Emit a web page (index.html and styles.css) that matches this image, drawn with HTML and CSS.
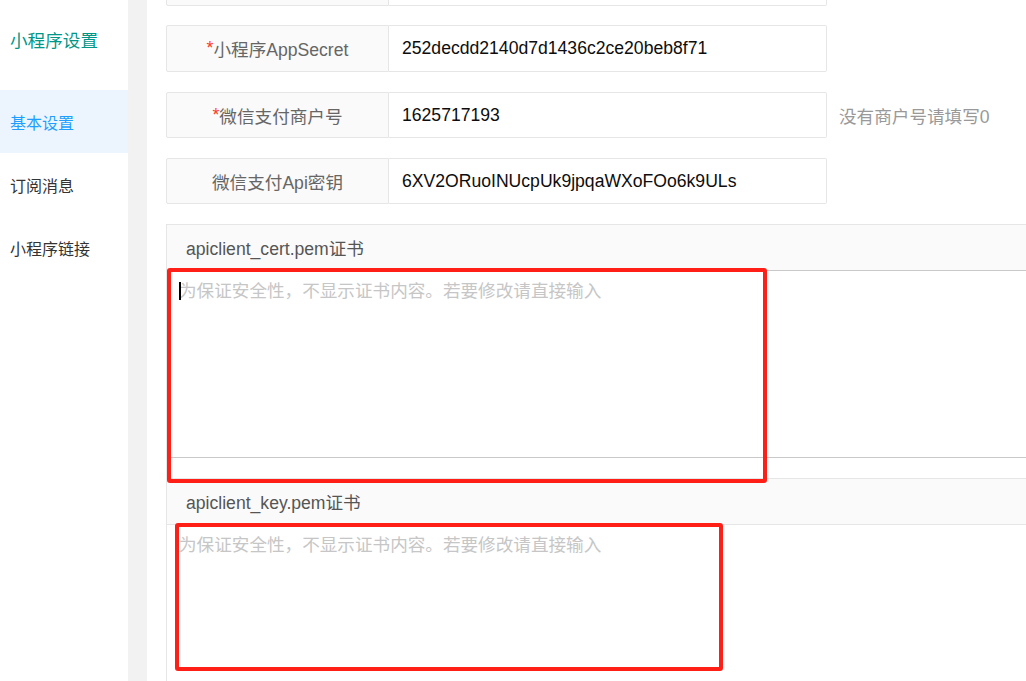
FILE: index.html
```html
<!DOCTYPE html>
<html lang="zh-CN">
<head>
<meta charset="utf-8">
<title>小程序设置</title>
<link rel="stylesheet" href="styles.css">
</head>
<body>
<div class="page">
  <aside class="sidebar">
    <div class="side-title">小程序设置</div>
    <ul class="menu">
      <li class="menu-item active">基本设置</li>
      <li class="menu-item">订阅消息</li>
      <li class="menu-item">小程序链接</li>
    </ul>
  </aside>
  <div class="gutter"></div>
  <main class="main">
    <div class="form">
      <div class="row row-first">
        <div class="label"></div>
        <div class="input"></div>
      </div>
      <div class="row row-tall">
        <div class="label"><span class="req">*</span>小程序AppSecret</div>
        <div class="input">252decdd2140d7d1436c2ce20beb8f71</div>
      </div>
      <div class="row">
        <div class="label"><span class="req">*</span>微信支付商户号</div>
        <div class="input">1625717193</div>
        <div class="hint">没有商户号请填写0</div>
      </div>
      <div class="row">
        <div class="label">微信支付Api密钥</div>
        <div class="input">6XV2ORuoINUcpUk9jpqaWXoFOo6k9ULs</div>
      </div>
      <div class="text-group">
        <div class="text-item">
          <div class="text-label">apiclient_cert.pem证书</div>
          <div class="ta-wrap focused">
            <textarea class="ta ta-focus" placeholder="为保证安全性，不显示证书内容。若要修改请直接输入"></textarea>
          </div>
        </div>
        <div class="text-item">
          <div class="text-label">apiclient_key.pem证书</div>
          <div class="ta-wrap">
            <textarea class="ta" placeholder="为保证安全性，不显示证书内容。若要修改请直接输入"></textarea>
          </div>
        </div>
      </div>
    </div>
  </main>
</div>
<div class="mark mark-1"></div>
<div class="mark mark-2"></div>
</body>
</html>
```

FILE: styles.css
```css
* { box-sizing: border-box; }
html, body {
  margin: 0;
  padding: 0;
  width: 1026px;
  height: 681px;
  overflow: hidden;
  background: #fff;
  font-family: "Liberation Sans", "Noto Sans CJK SC", sans-serif;
}
body { position: relative; }
.page {
  display: flex;
  height: 681px;
}
.sidebar {
  width: 128px;
  flex: none;
  background: #fff;
}
.side-title {
  height: 90px;
  padding: 29px 0 0 10px;
  font-size: 17.6px;
  line-height: 24px;
  color: #009688;
}
.menu {
  list-style: none;
  margin: 0;
  padding: 0;
}
.menu-item {
  height: 63px;
  display: flex;
  align-items: center;
  padding-left: 10px;
  font-size: 16px;
  color: #333;
}
.menu-item.active {
  background: #ecf4fd;
  color: #1e9fff;
}
.gutter {
  width: 19px;
  flex: none;
  background: #f2f2f2;
}
.main {
  flex: 1;
  min-width: 0;
  overflow: hidden;
  padding-left: 19px;
}
.form {
  margin-top: -40px;
  font-size: 17.6px;
}
.row {
  display: flex;
  align-items: center;
  margin-bottom: 20px;
}
.row-first {
  margin-bottom: 19px;
}
.label {
  width: 223px;
  height: 46px;
  flex: none;
  display: flex;
  align-items: center;
  justify-content: center;
  background: #fafafa;
  border: 1px solid #e6e6e6;
  border-radius: 2px 0 0 2px;
  color: #666;
}
.row-tall .label,
.row-tall .input {
  height: 47px;
}
.req {
  color: #ff3a22;
}
.input {
  width: 438px;
  height: 46px;
  flex: none;
  display: flex;
  align-items: center;
  padding-left: 13px;
  border: 1px solid #e6e6e6;
  border-left: none;
  border-radius: 0 2px 2px 0;
  color: #0d0d0d;
  white-space: nowrap;
  overflow: hidden;
}
.hint {
  margin-left: 12px;
  color: #999;
  white-space: nowrap;
}
.text-group {
  width: 1000px;
  border-left: 1px solid #e6e6e6;
}
.text-item {
  padding-bottom: 20px;
}
.text-label {
  height: 46px;
  display: flex;
  align-items: center;
  padding-left: 19px;
  background: #fafafa;
  border-top: 1px solid #e6e6e6;
  color: #555;
}
.ta-wrap {
  position: relative;
}
.ta {
  display: block;
  width: 100%;
  height: 188px;
  margin: 0;
  padding: 10px 12px;
  border: none;
  border-top: 1px solid #e6e6e6;
  border-bottom: 1px solid #e6e6e6;
  border-radius: 0;
  font-family: inherit;
  font-size: 17.6px;
  line-height: 20px;
  color: #333;
  resize: none;
  outline: none;
  background: #fff;
}
.ta::placeholder {
  color: #c6c6c6;
}
.ta-focus {
  border-top-color: #c9c9c9;
  border-bottom-color: #c9c9c9;
}
.ta-wrap.focused::before {
  content: "";
  position: absolute;
  left: 12px;
  top: 12px;
  width: 2px;
  height: 18px;
  background: #000;
  z-index: 1;
}
.mark {
  position: absolute;
  border: 4px solid #ff1f17;
  border-radius: 3px;
  pointer-events: none;
}
.mark-1 {
  left: 167px;
  top: 268px;
  width: 600px;
  height: 215px;
}
.mark-2 {
  left: 175px;
  top: 523px;
  width: 548px;
  height: 148px;
}
```
